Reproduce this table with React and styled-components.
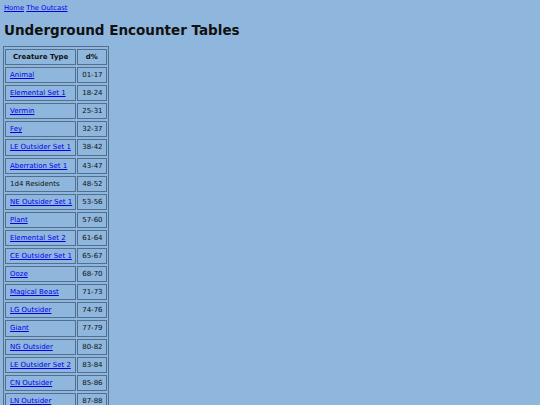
import styled, { createGlobalStyle } from "styled-components";

const rows = [
  ["Animal", "01-17", true],
  ["Elemental Set 1", "18-24", true],
  ["Vermin", "25-31", true],
  ["Fey", "32-37", true],
  ["LE Outsider Set 1", "38-42", true],
  ["Aberration Set 1", "43-47", true],
  ["1d4 Residents", "48-52", false],
  ["NE Outsider Set 1", "53-56", true],
  ["Plant", "57-60", true],
  ["Elemental Set 2", "61-64", true],
  ["CE Outsider Set 1", "65-67", true],
  ["Ooze", "68-70", true],
  ["Magical Beast", "71-73", true],
  ["LG Outsider", "74-76", true],
  ["Giant", "77-79", true],
  ["NG Outsider", "80-82", true],
  ["LE Outsider Set 2", "83-84", true],
  ["CN Outsider", "85-86", true],
  ["LN Outsider", "87-88", true],
];

export default function App() {
  return (
    <>
      <GlobalStyle />
      <Breadcrumb>
        <Crumb href="#">Home</Crumb> <Crumb href="#">The Outcast</Crumb>
      </Breadcrumb>
      <Title>Underground Encounter Tables</Title>
      <Table>
        <thead>
          <tr>
            <Head>Creature Type</Head>
            <Head>d%</Head>
          </tr>
        </thead>
        <tbody>
          {rows.map(([name, roll, link]) => (
            <tr key={name}>
              <Cell>{link ? <Crumb href="#">{name}</Crumb> : name}</Cell>
              <Cell>{roll}</Cell>
            </tr>
          ))}
        </tbody>
      </Table>
    </>
  );
}

const GlobalStyle = createGlobalStyle`
  html, body {
    background: #8fb6dc;
  }
  body {
    margin: 3px;
    font-family: "DejaVu Sans", Verdana, sans-serif;
    font-size: 7px;
    color: #111;
  }
`;

const Breadcrumb = styled.div`
  font-size: 6.8px;
  line-height: 8px;
  padding: 1px 0 0 1px;
`;

const Crumb = styled.a`
  color: #0000ee;
  text-decoration: underline;
`;

const Title = styled.h1`
  font-size: 13.5px;
  font-weight: bold;
  line-height: 16px;
  margin: 10px 0 8px;
  padding-left: 1px;
`;

const Table = styled.table`
  border: 1px solid #52708e;
  border-spacing: 1px 2px;
`;

const Head = styled.th`
  border: 1px solid #52708e;
  padding: 3px;
  line-height: 8.1px;
  font-size: 7px;
  font-weight: bold;
  text-align: center;
`;

const Cell = styled.td`
  border: 1px solid #52708e;
  padding: 3px 3px 3px 4px;
  line-height: 8.1px;
  font-size: 7px;
  white-space: nowrap;
`;
